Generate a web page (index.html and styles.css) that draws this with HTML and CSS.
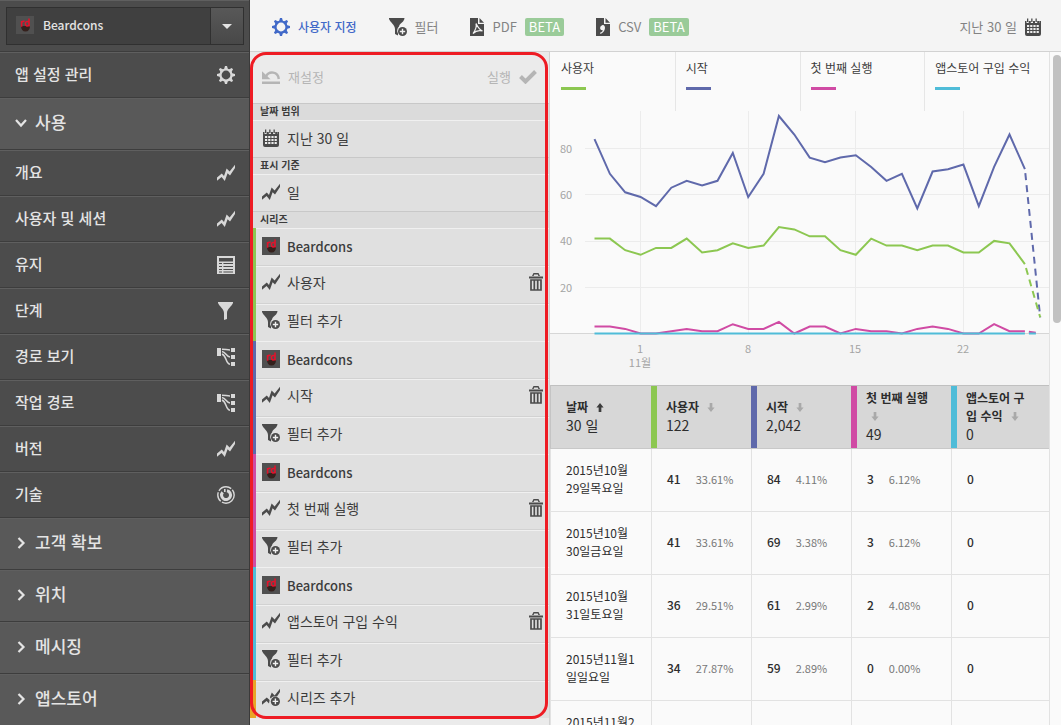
FILE: index.html
```html
<!DOCTYPE html>
<html lang="ko">
<head>
<meta charset="utf-8">
<title>Beardcons</title>
<link rel="stylesheet" href="styles.css">
</head>
<body>
<svg class="sprite" aria-hidden="true">
  <symbol id="i-gear" viewBox="0 0 18 18"><circle cx="9" cy="9" r="5.500" fill="none" stroke="currentColor" stroke-width="2.200"/><g fill="currentColor"><path id="tooth" d="M7 3.600 8 0h2l1 3.600z"/><use href="#tooth" transform="rotate(45 9 9)"/><use href="#tooth" transform="rotate(90 9 9)"/><use href="#tooth" transform="rotate(135 9 9)"/><use href="#tooth" transform="rotate(180 9 9)"/><use href="#tooth" transform="rotate(225 9 9)"/><use href="#tooth" transform="rotate(270 9 9)"/><use href="#tooth" transform="rotate(315 9 9)"/></g></symbol>
  <symbol id="i-trend" viewBox="0 0 18 18"><path d="M0 13.600 4.800 9.600 7 12 9.600 4.600 12.600 7.400 18 .8V4L13 11.600 10.600 9.200 7.800 17 4.600 13 0 16.800z" fill="currentColor"/></symbol>
  <symbol id="i-trend-add" viewBox="0 0 18 18"><path d="M0 13.600 4.800 9.600 7.600 12 7 15.400 4.600 13 0 16.800zM8 9 9.800 4.600 12.600 7.400 18 .8V4L15 8.400 11 8.600 8.400 10.600z" fill="currentColor"/><circle cx="13.400" cy="13.400" r="4.600" fill="currentColor"/><path d="M13.400 10.600v5.600M10.600 13.400h5.600" stroke="#f0f0f0" stroke-width="1.400"/></symbol>
  <symbol id="i-table" viewBox="0 0 18 18"><path d="M0 0h18v18H0z" fill="currentColor"/><path d="M2 7.500h3M2 10.500h3M2 13.500h3M6.400 7.500H16M6.400 10.500H16M6.400 13.500H16M2 16h3M6.400 16H16" stroke="#4c4c4c" stroke-width="1.200"/><path d="M2 2h14v3.500H2z" fill="#4c4c4c"/></symbol>
  <symbol id="i-funnel" viewBox="0 0 18 18"><path d="M1 0h15v1C14.500 5 10.400 6 10 11v6l-3 1v-7C6.600 6 2.500 5 1 1z" fill="currentColor"/></symbol>
  <symbol id="i-funnel-add" viewBox="0 0 18 18"><path d="M0 0h15.400v1C14 5 10.600 5.400 10 8.400 8 10.400 7.600 13 9 15.600V17.500L6 16v-5C5.600 6 1.500 5 0 1z" fill="currentColor"/><circle cx="13.500" cy="13.500" r="4.500" fill="currentColor"/><path d="M13.500 10.800v5.400M10.800 13.500h5.400" stroke="#f0f0f0" stroke-width="1.400"/></symbol>
  <symbol id="i-path" viewBox="0 0 18 18"><path d="M0 0h4v8H0zM14 0h4v4h-4zM14 7h4v4h-4zM14 14h4v4h-4z" fill="currentColor"/><path d="M5 1.200c3 0 5 .8 8 .8M5 3.400c4 .5 4 5 8 5.600M5 6c5 2 3 9 8 10.400" fill="none" stroke="currentColor" stroke-width="1.500"/></symbol>
  <symbol id="i-tech" viewBox="0 0 18 18"><circle cx="9" cy="9" r="8.200" fill="none" stroke="currentColor" stroke-width="1.400" stroke-dasharray="17 1.500 10 1.500 14 1.500"/><path d="M10 4.700A4.500 4.500 0 1 1 5.600 6.200" fill="none" stroke="currentColor" stroke-width="3"/><path d="M7 3h1.600v3H7z" fill="currentColor"/></symbol>
  <symbol id="i-down" viewBox="0 0 14 14"><path d="m2 4 5 5.500L12 4" fill="none" stroke="currentColor" stroke-width="2.200"/></symbol>
  <symbol id="i-right" viewBox="0 0 14 14"><path d="m4.500 2 5 5-5 5" fill="none" stroke="currentColor" stroke-width="2.200"/></symbol>
  <symbol id="i-beard" viewBox="0 0 18 18"><path d="M0 0h18v18H0z" fill="#505050"/><path d="M5 10h9c0 3.500-1.700 5.500-4.500 5.500S5 13.500 5 10z" fill="#35201c"/><path d="M5.600 10.800V5M5.600 7.500C5.600 5.500 7 5 8.600 5.400M13 2.500V10.500M13 6.200C11 4.600 9.400 5.800 9.400 7.800s1.800 3 3.600 1.400" fill="none" stroke="#e3122b" stroke-width="1.600"/></symbol>
  <symbol id="i-pdf" viewBox="0 0 14 18"><path d="M0 0h8v6h6v12H0z" fill="currentColor"/><path d="M9.500 0 14 4.700H9.500z" fill="currentColor"/><path d="M6 5.500c2 4 3 6 6.500 7.500-4-1-7 0-9.500 2.500C5.500 12 7 9 6 5.500z" fill="none" stroke="#f4f4f4" stroke-width="1.200"/></symbol>
  <symbol id="i-csv" viewBox="0 0 14 18"><path d="M0 0h8v6h6v12H0z" fill="currentColor"/><path d="M9.500 0 14 4.700H9.500z" fill="currentColor"/><path d="M6.200 7.200c4-1 4 7-1.700 8.800L4 14.800c2-.8 2.800-1.800 2.700-2.600-3.400.4-3.200-4.300-.5-5z" fill="#f4f4f4"/></symbol>
  <symbol id="i-cal" viewBox="0 0 16 18"><path d="M0 3h1.500v2h2.200V3h2.100v2H8V3h2v2h2.200V3h2v2H16v11a2 2 0 0 1-2 2H2a2 2 0 0 1-2-2z" fill="currentColor"/><path d="M2 .5h1.300V4H2zM6.200.5h1.300V4H6.200zM10.500.5h1.300V4h-1.300zM14.400 3H16v3h-1.600z" fill="currentColor"/><g fill="#ececec"><path id="calrow" d="M2 7h2.200v2H2zM5.200 7h2.200v2H5.200zM8.400 7h2.200v2H8.400zM11.600 7h2.200v2h-2.200z"/><use href="#calrow" y="3"/><use href="#calrow" y="6"/></g></symbol>
  <symbol id="i-reset" viewBox="0 0 18 14"><path d="M0 12.700h18M4 6.500c3-6 12-5 12.800 2.500" fill="none" stroke="currentColor" stroke-width="2.400"/><path d="M0 1.200v8h8.500z" fill="currentColor"/></symbol>
  <symbol id="i-check" viewBox="0 0 18 14"><path d="m1.500 6.500 5 5L16.500 1.500" fill="none" stroke="currentColor" stroke-width="4"/></symbol>
  <symbol id="i-trash" viewBox="0 0 14 18"><path d="M0 3.500h14v2H0zM3 3l1.500-3h5L11 3H9.400L8.800 1.500H5.200L4.600 3z" fill="currentColor"/><path d="M2 7h10v10H2zM5.300 7v10M8.700 7v10" fill="none" stroke="currentColor" stroke-width="1.700"/></symbol>
  <symbol id="i-sortdown" viewBox="0 0 8 10"><path d="M2.500 0h3v5H8L4 10 0 5h2.500z" fill="currentColor"/></symbol>
  <symbol id="i-sortup" viewBox="0 0 8 10"><path d="M2.500 10h3V5H8L4 0 0 5h2.500z" fill="currentColor"/></symbol>
</svg>

<div class="app">
  <nav class="sidebar">
    <div class="picker-row">
      <button class="picker" type="button">
        <span class="picker-name"><svg class="icon"><use href="#i-beard"/></svg>Beardcons</span>
        <span class="picker-arrow"></span>
      </button>
    </div>
    <a class="item" href="#settings">앱 설정 관리<svg class="icon"><use href="#i-gear"/></svg></a>
    <a class="section" href="#usage"><svg class="chevron"><use href="#i-down"/></svg>사용</a>
    <a class="item" href="#overview">개요<svg class="icon"><use href="#i-trend"/></svg></a>
    <a class="item" href="#users">사용자 및 세션<svg class="icon"><use href="#i-trend"/></svg></a>
    <a class="item" href="#retention">유지<svg class="icon"><use href="#i-table"/></svg></a>
    <a class="item" href="#funnel">단계<svg class="icon"><use href="#i-funnel"/></svg></a>
    <a class="item" href="#view-paths">경로 보기<svg class="icon"><use href="#i-path"/></svg></a>
    <a class="item" href="#action-paths">작업 경로<svg class="icon"><use href="#i-path"/></svg></a>
    <a class="item" href="#versions">버전<svg class="icon"><use href="#i-trend"/></svg></a>
    <a class="item" href="#technology">기술<svg class="icon"><use href="#i-tech"/></svg></a>
    <a class="section" href="#acquisition"><svg class="chevron"><use href="#i-right"/></svg>고객 확보</a>
    <a class="section" href="#location"><svg class="chevron"><use href="#i-right"/></svg>위치</a>
    <a class="section" href="#messaging"><svg class="chevron"><use href="#i-right"/></svg>메시징</a>
    <a class="section" href="#appstore"><svg class="chevron"><use href="#i-right"/></svg>앱스토어</a>
  </nav>

  <div class="workspace">
    <header class="toolbar">
      <button class="tool active" type="button"><svg class="icon"><use href="#i-gear"/></svg>사용자 지정</button>
      <button class="tool" type="button"><svg class="icon"><use href="#i-funnel-add"/></svg>필터</button>
      <button class="tool" type="button"><svg class="icon doc"><use href="#i-pdf"/></svg>PDF<span class="beta">BETA</span></button>
      <button class="tool" type="button"><svg class="icon doc"><use href="#i-csv"/></svg>CSV<span class="beta">BETA</span></button>
      <button class="tool range" type="button">지난 30 일<svg class="icon cal"><use href="#i-cal"/></svg></button>
    </header>

    <div class="content">
      <aside class="customize">
        <div class="highlighted">
          <div class="actions">
            <button type="button" disabled><svg class="icon"><use href="#i-reset"/></svg>재설정</button>
            <button type="button" disabled>실행<svg class="icon"><use href="#i-check"/></svg></button>
          </div>
          <h2 class="label">날짜 범위</h2>
          <button class="row" type="button"><svg class="icon"><use href="#i-cal"/></svg>지난 30 일</button>
          <h2 class="label">표시 기준</h2>
          <button class="row" type="button"><svg class="icon"><use href="#i-trend"/></svg>일</button>
          <h2 class="label">시리즈</h2>
          <div class="series green">
            <button class="row app-name" type="button"><svg class="icon"><use href="#i-beard"/></svg>Beardcons</button>
            <div class="row"><svg class="icon"><use href="#i-trend"/></svg>사용자<button class="trash" type="button" aria-label="삭제"><svg><use href="#i-trash"/></svg></button></div>
            <button class="row" type="button"><svg class="icon"><use href="#i-funnel-add"/></svg>필터 추가</button>
          </div>
          <div class="series blue">
            <button class="row app-name" type="button"><svg class="icon"><use href="#i-beard"/></svg>Beardcons</button>
            <div class="row"><svg class="icon"><use href="#i-trend"/></svg>시작<button class="trash" type="button" aria-label="삭제"><svg><use href="#i-trash"/></svg></button></div>
            <button class="row" type="button"><svg class="icon"><use href="#i-funnel-add"/></svg>필터 추가</button>
          </div>
          <div class="series pink">
            <button class="row app-name" type="button"><svg class="icon"><use href="#i-beard"/></svg>Beardcons</button>
            <div class="row"><svg class="icon"><use href="#i-trend"/></svg>첫 번째 실행<button class="trash" type="button" aria-label="삭제"><svg><use href="#i-trash"/></svg></button></div>
            <button class="row" type="button"><svg class="icon"><use href="#i-funnel-add"/></svg>필터 추가</button>
          </div>
          <div class="series cyan">
            <button class="row app-name" type="button"><svg class="icon"><use href="#i-beard"/></svg>Beardcons</button>
            <div class="row"><svg class="icon"><use href="#i-trend"/></svg>앱스토어 구입 수익<button class="trash" type="button" aria-label="삭제"><svg><use href="#i-trash"/></svg></button></div>
            <button class="row" type="button"><svg class="icon"><use href="#i-funnel-add"/></svg>필터 추가</button>
          </div>
          <div class="series orange">
            <button class="row add" type="button"><svg class="icon"><use href="#i-trend-add"/></svg>시리즈 추가</button>
          </div>
        </div>
      </aside>

      <main class="report">
        <ul class="legend">
          <li class="green">사용자</li>
          <li class="blue">시작</li>
          <li class="pink">첫 번째 실행</li>
          <li class="cyan">앱스토어 구입 수익</li>
        </ul>
        <svg class="chart" viewBox="0 0 499 274" role="img" aria-label="지난 30 일">
          <path class="axis-area" d="M0 223h499v51H0z"/>
          <path class="grid" d="M35 37.500h464M35 83.500h464M35 130.500h464M35 176.500h464M90.500 0v222M198.500 0v222M305.500 0v222M413.500 0v222"/>
          <path class="baseline" d="M0 222.500h499"/>
          <g class="tick"><text x="16" y="42">80</text><text x="16" y="88">60</text><text x="16" y="134">40</text><text x="16" y="181">20</text></g>
          <g class="tick"><text x="90" y="242">1</text><text x="90" y="256">11월</text><text x="198" y="242">8</text><text x="305" y="242">15</text><text x="413" y="242">22</text></g>
          <g id="lines"></g>
        </svg>
        <table class="data">
          <thead>
            <tr>
              <th class="date"><button type="button">날짜 <svg class="sort on"><use href="#i-sortup"/></svg></button><b>30 일</b></th>
              <th class="green"><button type="button">사용자 <svg class="sort"><use href="#i-sortdown"/></svg></button><b>122</b></th>
              <th class="blue"><button type="button">시작 <svg class="sort"><use href="#i-sortdown"/></svg></button><b>2,042</b></th>
              <th class="pink"><button type="button">첫 번째 실행 <svg class="sort"><use href="#i-sortdown"/></svg></button><b>49</b></th>
              <th class="cyan"><button type="button">앱스토어 구입 수익 <svg class="sort"><use href="#i-sortdown"/></svg></button><b>0</b></th>
            </tr>
          </thead>
          <tbody>
            <tr><td>2015년10월29일목요일</td><td>41<small>33.61%</small></td><td>84<small>4.11%</small></td><td>3<small>6.12%</small></td><td>0</td></tr>
            <tr><td>2015년10월30일금요일</td><td>41<small>33.61%</small></td><td>69<small>3.38%</small></td><td>3<small>6.12%</small></td><td>0</td></tr>
            <tr><td>2015년10월31일토요일</td><td>36<small>29.51%</small></td><td>61<small>2.99%</small></td><td>2<small>4.08%</small></td><td>0</td></tr>
            <tr><td>2015년11월1일일요일</td><td>34<small>27.87%</small></td><td>59<small>2.89%</small></td><td>0<small>0.00%</small></td><td>0</td></tr>
            <tr><td>2015년11월2일월요일</td><td></td><td></td><td></td><td></td></tr>
          </tbody>
        </table>
      </main>
      <div class="scrollbar"><div class="thumb"></div></div>
    </div>
  </div>
</div>
<script src="chart.js"></script>
</body>
</html>
```
FILE: styles.css
```css
* { box-sizing: border-box; }

:root {
  --green: #8cc751;
  --blue: #5f69ab;
  --pink: #d04ba4;
  --cyan: #4fbcd8;
  --orange: #e9a527;
}

body {
  margin: 0;
  font-family: "Noto Sans CJK KR", "Noto Sans", sans-serif;
  font-size: 14px;
  color: #3c3c3c;
  overflow: hidden;
}

button {
  font: inherit;
  color: inherit;
  background: none;
  border: 0;
  padding: 0;
  text-align: left;
}

a { color: inherit; text-decoration: none; }
svg { display: block; flex: none; }
.sprite { position: absolute; width: 0; height: 0; }
.icon { width: 18px; height: 18px; }

.green { --series: var(--green); }
.blue { --series: var(--blue); }
.pink { --series: var(--pink); }
.cyan { --series: var(--cyan); }
.orange { --series: var(--orange); }

.app { display: flex; height: 100vh; }

/* Sidebar */
.sidebar {
  width: 250px;
  flex: none;
  overflow: hidden;
  background: #4c4c4c;
  color: #e4e4e4;
  border-right: 1px solid #3a3a3a;
}
.picker-row, .item, .section {
  display: flex;
  align-items: center;
  border-top: 1px solid #5f5f5f;
  border-bottom: 1px solid #3d3d3d;
}
.picker-row { height: 52px; padding: 0 5px 0 6px; }
.picker {
  display: flex;
  width: 100%;
  height: 38px;
  border: 1px solid #303030;
  background: #404040;
  font-weight: 500;
  font-size: 12px;
}
.picker-name { display: flex; align-items: center; flex: 1; gap: 9px; padding: 0 0 3px 9px; }
.picker-arrow {
  display: flex;
  align-items: center;
  justify-content: center;
  width: 33px;
  border-left: 1px solid #303030;
  background: linear-gradient(#585858, #484848);
}
.picker-arrow::after { content: ""; border: 5px solid transparent; border-top-color: #e4e4e4; border-bottom: 0; }
.item {
  justify-content: space-between;
  height: 46px;
  padding: 0 14px 4px 15px;
  font-size: 15px;
  font-weight: 500;
}
.item .icon { color: #d8d8d8; margin-top: 3px; }
.section {
  gap: 7px;
  height: 52px;
  padding: 0 14px 5px;
  background: #595959;
  font-size: 17px;
  font-weight: 500;
}
.chevron { width: 14px; height: 14px; margin-top: 3px; }

/* Toolbar */
.workspace { display: flex; flex-direction: column; flex: 1; min-width: 0; }
.toolbar {
  display: flex;
  align-items: center;
  gap: 32px;
  height: 52px;
  flex: none;
  padding: 2px 20px 0 22px;
  background: #f4f4f4;
  border-bottom: 1px solid #d2d2d2;
  color: #838383;
  font-size: 13px;
}
.tool { display: flex; align-items: center; gap: 8px; white-space: nowrap; }
.tool .icon { color: #4b4b4b; }
.tool .doc { width: 14px; }
.tool .cal { width: 16px; }
.active { font-size: 12px; font-weight: 500; }
.active, .active .icon { color: #4169c8; }
.beta { padding: 0 4px; border-radius: 2px; background: #9acb99; color: #fff; line-height: 18px; }
.range { margin-left: auto; }

.content { display: flex; flex: 1; min-height: 0; }

/* Customize panel */
.customize {
  width: 300px;
  flex: none;
  overflow: hidden;
  background: #ebebeb;
  border-right: 1px solid #d2d2d2;
}
.highlighted { position: relative; padding-bottom: 1px; }
.highlighted::after {
  content: "";
  position: absolute;
  inset: 0 1px 0 0;
  border: 3px solid #ee1c24;
  border-radius: 16px;
  pointer-events: none;
}
.actions {
  display: flex;
  justify-content: space-between;
  height: 51px;
  padding: 0 12px 2px;
  color: #b5b5b5;
  font-size: 13px;
}
.actions button { display: flex; align-items: center; gap: 8px; }
.actions .icon { height: 14px; }
.label {
  height: 17px;
  margin: 0;
  padding-left: 10px;
  border-top: 1px solid #c8c8c8;
  background: #dbdbdb;
  font-size: 10px;
  line-height: 13px;
  font-weight: 700;
}
.row {
  display: flex;
  align-items: center;
  gap: 7px;
  width: 100%;
  height: 37px;
  padding: 0 6px 2px 12px;
  border-top: 1px solid #f0f0f0;
  background: #e0e0e0;
}
.row .icon { color: #4b4b4b; }
.app-name { font-size: 13px; font-weight: 500; }
.series { border-left: 6px solid var(--series); }
.series .row { padding-left: 6px; }
.series .row + .row, .series .add {
  height: 38px;
  padding-bottom: 5px;
  border-top: 1px solid #d2d2d2;
  box-shadow: inset 0 1px #f0f0f0;
}
.trash { margin-left: auto; color: #4b4b4b; }
.trash svg { width: 14px; height: 18px; }

/* Report */
.report { flex: 1; min-width: 0; overflow: hidden; background: #fafafa; border-right: 1px solid #e2e2e2; }
.legend { display: flex; list-style: none; margin: 0; padding: 0; font-size: 12px; }
.legend li { flex: 1; height: 59px; padding: 8px 0 0 11px; line-height: 16px; white-space: nowrap; }
.legend li + li { border-left: 1px solid #e6e6e6; padding-left: 10px; }
.legend li::after { content: ""; display: block; width: 25px; height: 3px; margin-top: 11px; background: var(--series); }

.chart { width: 100%; height: auto; }
.axis-area { fill: #f4f4f4; }
.grid { stroke: #ececec; }
.baseline { stroke: #d6d6d6; }
.tick { fill: #a4a4a4; font-size: 11px; text-anchor: middle; }
.line { fill: none; stroke: var(--series); stroke-width: 2; }
.partial { stroke-dasharray: 7 5; stroke-dashoffset: -4; }

.data { width: 100%; table-layout: fixed; border-collapse: separate; border-spacing: 0; font-size: 12px; line-height: 18px; color: #2d2d2d; }
.data th, .data td { padding: 0 14px 2px 15px; text-align: left; vertical-align: middle; }
.data th {
  width: 100px;
  height: 64px;
  padding: 0 18px 1px 15px;
  border-top: 1px solid #c0c0c0;
  border-bottom: 1px solid #c8c8c8;
  background: #d7d7d7;
  box-shadow: inset 6px 0 var(--series);
  font-weight: 700;
}
.data th.date { width: 101px; border-left: 1px solid #c4c4c4; box-shadow: none; }
.data th:last-child { width: auto; }
.data th b { display: block; font-size: 14px; font-weight: 400; line-height: 19px; }
.sort { display: inline-block; width: 8px; height: 9px; margin-left: 5px; color: #a9a9a9; }
.sort.on { color: #3c3c3c; }
.data td { height: 63px; border-bottom: 1px solid #e2e2e2; border-left: 1px solid #e2e2e2; }
.data td:nth-child(n+2) { font-weight: 500; }
.data td small { margin-left: 15px; font-size: 11px; font-weight: 400; color: #777; }

.scrollbar { width: 11px; flex: none; padding: 3px 0 0 3px; background: #fafafa; }
.thumb { height: 40%; border-radius: 4px; background: #c1c1c1; }
```
FILE: chart.js
```js
const series = [
  ["pink", [3,3,2,0,0,1,2,1,1,4,2,2,5,0,3,3,0,2,1,1,0,2,3,2,0,0,4,1,1,0]],
  ["blue", [84,69,61,59,55,63,66,64,66,78,59,69,94,86,76,74,76,77,72,66,69,54,70,71,73,55,72,86,71,7]],
  ["green", [41,41,36,34,37,37,41,35,36,39,37,38,46,45,42,42,36,34,41,38,38,36,38,38,35,35,40,39,30,7]],
  ["cyan", Array(30).fill(0)],
];

const group = document.getElementById("lines");

function drawLine(name, points) {
  const line = document.createElementNS("http://www.w3.org/2000/svg", "polyline");
  line.setAttribute("class", name);
  line.setAttribute("points", points.join(" "));
  group.appendChild(line);
}

for (const [color, values] of series) {
  const points = values.map((v, i) => `${(44.5 + i * 15.37).toFixed(1)},${(222.5 - v * 2.314).toFixed(1)}`);
  drawLine(`line ${color}`, points.slice(0, -1));
  drawLine(`line partial ${color}`, points.slice(-2));
}
```
